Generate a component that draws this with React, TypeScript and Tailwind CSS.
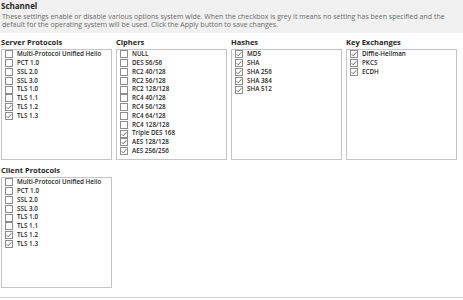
import React from 'react';

type Item = { label: string; checked: boolean };

const protocols: Item[] = [
  { label: 'Multi-Protocol Unified Hello', checked: false },
  { label: 'PCT 1.0', checked: false },
  { label: 'SSL 2.0', checked: false },
  { label: 'SSL 3.0', checked: false },
  { label: 'TLS 1.0', checked: false },
  { label: 'TLS 1.1', checked: false },
  { label: 'TLS 1.2', checked: true },
  { label: 'TLS 1.3', checked: true },
];

const ciphers: Item[] = [
  { label: 'NULL', checked: false },
  { label: 'DES 56/56', checked: false },
  { label: 'RC2 40/128', checked: false },
  { label: 'RC2 56/128', checked: false },
  { label: 'RC2 128/128', checked: false },
  { label: 'RC4 40/128', checked: false },
  { label: 'RC4 56/128', checked: false },
  { label: 'RC4 64/128', checked: false },
  { label: 'RC4 128/128', checked: false },
  { label: 'Triple DES 168', checked: true },
  { label: 'AES 128/128', checked: true },
  { label: 'AES 256/256', checked: true },
];

const hashes: Item[] = ['MD5', 'SHA', 'SHA 256', 'SHA 384', 'SHA 512'].map((label) => ({ label, checked: true }));
const exchanges: Item[] = ['Diffie-Hellman', 'PKCS', 'ECDH'].map((label) => ({ label, checked: true }));

const Check = ({ checked }: { checked: boolean }) => (
  <span className="w-[8px] h-[8px] border border-[#8c8c8c] bg-white flex items-center justify-center shrink-0">
    {checked && (
      <svg width="6" height="6" viewBox="0 0 6 6">
        <path d="M0.6 3.2 L2.2 4.8 L5.4 1.2" fill="none" stroke="#5a5a5a" strokeWidth="0.9" />
      </svg>
    )}
  </span>
);

const Group = ({ title, items }: { title: string; items: Item[] }) => (
  <div className="flex flex-col w-[111px]">
    <div className="text-[7.5px] font-bold text-[#262626] leading-[8px] h-[8px]">{title}</div>
    <div className="mt-[3px] h-[111px] border border-[#c4c4c4] bg-white pl-[3px]">
      {items.map((it) => (
        <div key={it.label} className="flex items-center gap-[4px] h-[8.8px]">
          <Check checked={it.checked} />
          <span className="text-[6.3px] font-semibold text-[#262626] leading-none whitespace-nowrap">{it.label}</span>
        </div>
      ))}
    </div>
  </div>
);

export default function App() {
  return (
    <div className="w-[463px] h-[300px] bg-white overflow-hidden" style={{ fontFamily: '"Open Sans", "Noto Sans", sans-serif' }}>
      <div className="bg-[#f0f0f0] h-[33px] px-[1px] pt-[1px]">
        <div className="text-[8px] font-bold text-[#262626] leading-[9px]">Schannel</div>
        <p className="mt-[3px] text-[7px] text-[#6a6a6a] leading-[8px] pl-[1px]">
          These settings enable or disable various options system wide. When the checkbox is grey it means no setting has been specified and the
          default for the operating system will be used. Click the Apply button to save changes.
        </p>
      </div>
      <div className="pl-[1px] pt-[5px] flex flex-col gap-[6px]">
        <div className="flex gap-[4px]">
          <Group title="Server Protocols" items={protocols} />
          <Group title="Ciphers" items={ciphers} />
          <Group title="Hashes" items={hashes} />
          <Group title="Key Exchanges" items={exchanges} />
        </div>
        <Group title="Client Protocols" items={protocols} />
      </div>
      <div className="mt-[9px] border-t border-[#d4d4d4]" />
    </div>
  );
}
